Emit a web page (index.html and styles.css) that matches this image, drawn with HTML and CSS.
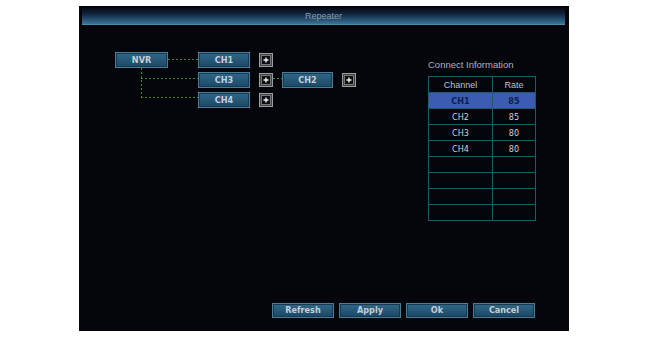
FILE: index.html
```html
<!DOCTYPE html>
<html>
<head>
<meta charset="utf-8">
<link rel="stylesheet" href="styles.css">
</head>
<body>
<div class="page">
  <div class="panel">
    <div class="titlebar">Repeater</div>
    <div class="main">
      <div class="diagram">
        <svg class="links" viewBox="0 0 250 60" width="250" height="60" shape-rendering="crispEdges">
          <g stroke="#2e8c34" stroke-width="1" stroke-dasharray="2 2" fill="none">
            <path d="M53 7.5H83"/>
            <path d="M26.5 16V46"/>
            <path d="M26 26.5H83"/>
            <path d="M26 45.5H83"/>
            <path d="M158 26.5H167"/>
          </g>
        </svg>

        <div class="node nvr" style="left:0;top:0">NVR</div>
        <div class="node" style="left:83px;top:0">CH1</div>
        <div class="node" style="left:83px;top:20px">CH3</div>
        <div class="node" style="left:83px;top:40px">CH4</div>
        <div class="node ch2" style="left:167px;top:20px">CH2</div>

        <div class="plus" style="left:144px;top:1px"><svg viewBox="0 0 14 14"><rect x="0.5" y="0.5" width="13" height="13" fill="#444" stroke="#9c9c9c"/><rect x="2.5" y="2.5" width="9" height="9" fill="#0c1016" stroke="#777" stroke-width="1"/><path d="M7 4.5v5M4.5 7h5" stroke="#eeeeee" stroke-width="1.4"/></svg></div>
        <div class="plus" style="left:144px;top:21px"><svg viewBox="0 0 14 14"><rect x="0.5" y="0.5" width="13" height="13" fill="#444" stroke="#9c9c9c"/><rect x="2.5" y="2.5" width="9" height="9" fill="#0c1016" stroke="#777" stroke-width="1"/><path d="M7 4.5v5M4.5 7h5" stroke="#eeeeee" stroke-width="1.4"/></svg></div>
        <div class="plus" style="left:144px;top:41px"><svg viewBox="0 0 14 14"><rect x="0.5" y="0.5" width="13" height="13" fill="#444" stroke="#9c9c9c"/><rect x="2.5" y="2.5" width="9" height="9" fill="#0c1016" stroke="#777" stroke-width="1"/><path d="M7 4.5v5M4.5 7h5" stroke="#eeeeee" stroke-width="1.4"/></svg></div>
        <div class="plus" style="left:227px;top:21px"><svg viewBox="0 0 14 14"><rect x="0.5" y="0.5" width="13" height="13" fill="#444" stroke="#9c9c9c"/><rect x="2.5" y="2.5" width="9" height="9" fill="#0c1016" stroke="#777" stroke-width="1"/><path d="M7 4.5v5M4.5 7h5" stroke="#eeeeee" stroke-width="1.4"/></svg></div>
      </div>
      <div class="info">
        <div class="info-title">Connect Information</div>
        <table class="conn">
          <tr class="head"><td class="c1">Channel</td><td class="c2">Rate</td></tr>
          <tr class="sel"><td>CH1</td><td>85</td></tr>
          <tr><td>CH2</td><td>85</td></tr>
          <tr><td>CH3</td><td>80</td></tr>
          <tr><td>CH4</td><td>80</td></tr>
          <tr><td></td><td></td></tr>
          <tr><td></td><td></td></tr>
          <tr><td></td><td></td></tr>
          <tr><td></td><td></td></tr>
        </table>
      </div>
    </div>
    <div class="footer">
      <div class="btn">Refresh</div>
      <div class="btn">Apply</div>
      <div class="btn">Ok</div>
      <div class="btn">Cancel</div>
    </div>
  </div>
</div>
</body>
</html>
```

FILE: styles.css
```css
html, body {
  margin: 0;
  padding: 0;
  background: #ffffff;
}
.page {
  padding: 6px 0 0 79px;
}
.panel {
  width: 490px;
  height: 325px;
  background: #05050c;
  display: flex;
  flex-direction: column;
  font-family: "DejaVu Sans Condensed", "Liberation Sans", sans-serif;
}
.titlebar {
  margin: 2px 4px 0 3px;
  height: 17px;
  background: linear-gradient(#070b16 0%, #10223a 35%, #2a5a7c 80%, #3b7596 100%);
  border-bottom: 1px solid #4e8aa8;
  box-sizing: border-box;
  color: #8a9aaa;
  font-family: "Liberation Sans", sans-serif;
  font-size: 9px;
  line-height: 17px;
  text-align: center;
}
.main {
  flex: 1;
  display: flex;
  align-items: flex-start;
}
.diagram {
  position: relative;
  width: 250px;
  height: 60px;
  margin: 27px 0 0 36px;
}
.links {
  position: absolute;
  left: 0;
  top: 0;
  display: block;
}
.node {
  position: absolute;
  width: 52px;
  height: 16px;
  box-sizing: border-box;
  border: 1px solid #4a7c98;
  background: linear-gradient(#2f6888, #1c4864);
  box-shadow: inset 0 0 0 1px #163a52;
  color: #c4ced8;
  font-size: 9px;
  font-weight: bold;
  line-height: 14px;
  text-align: center;
}
.nvr { width: 53px; }
.ch2 { width: 51px; }
.plus {
  position: absolute;
  width: 14px;
  height: 14px;
}
.plus svg { display: block; width: 14px; height: 14px; }
.info {
  margin: 34px 33px 0 auto;
  width: 108px;
}
.info-title {
  color: #aab4be;
  font-family: "Liberation Sans", sans-serif;
  font-size: 9.5px;
  height: 17px;
  line-height: 12px;
}
.conn {
  width: 108px;
  border-collapse: collapse;
  font-size: 9px;
  color: #c8d0d8;
}
.conn td {
  border: 1px solid #1d5a70;
  height: 15px;
  padding: 0;
  text-align: center;
  line-height: 14px;
}
.conn .c1 { width: 63px; }
.conn .head td {
  font-family: "Liberation Sans", sans-serif;
  color: #b8c2cc;
}
.conn .sel td {
  background: #3b5cb2;
  color: #0e1c4e;
  font-weight: bold;
}
.footer {
  margin-top: auto;
  display: flex;
  justify-content: flex-end;
  gap: 5px;
  padding: 0 34px 13px 0;
}
.btn {
  width: 62px;
  height: 15px;
  box-sizing: border-box;
  border: 1px solid #4a7c98;
  background: linear-gradient(#2f6888, #1c4864);
  box-shadow: inset 0 0 0 1px #163a52;
  color: #c4ced8;
  font-size: 9px;
  font-weight: bold;
  line-height: 13px;
  text-align: center;
}
```
